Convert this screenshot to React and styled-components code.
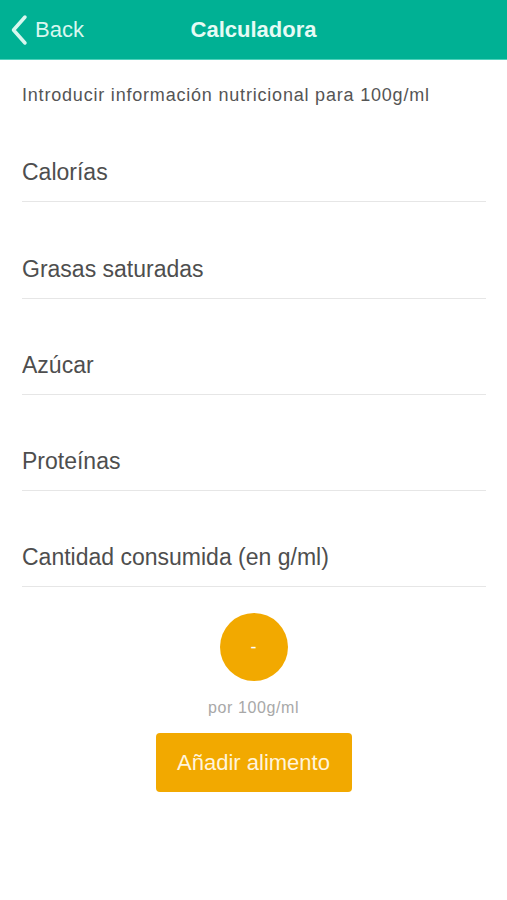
import React, { useState } from "react";
import styled, { createGlobalStyle } from "styled-components";

const GlobalStyle = createGlobalStyle`
  body {
    margin: 0;
    background: #ffffff;
    font-family: "Liberation Sans", Arial, sans-serif;
  }
`
const Page = styled.div`
  width: 507px;
  min-height: 900px;
  background: #ffffff;
`
const Header = styled.header`
  position: relative;
  height: 59px;
  background: #00b194;
  border-bottom: 1px solid #4fd1bb;
  display: flex;
  align-items: center;
  justify-content: center;
`
const BackButton = styled.button`
  position: absolute;
  left: 9px;
  top: 0;
  height: 59px;
  display: flex;
  align-items: center;
  gap: 4px;
  padding: 0;
  border: none;
  background: transparent;
  color: #d8f7ef;
  font-family: "Liberation Sans", Arial, sans-serif;
  font-size: 22px;
`
const Title = styled.h1`
  margin: 0;
  color: #e6fbf5;
  font-size: 22px;
  font-weight: bold;
`
const Intro = styled.p`
  margin: 25px 0 0 22px;
  line-height: 20px;
  font-size: 18px;
  letter-spacing: 0.8px;
  color: #555555;
`
const Form = styled.form`
  padding: 1px 21px 0 22px;
`
const Row = styled.div`
  height: 95.25px;
  display: flex;
  align-items: flex-end;
  border-bottom: 1px solid #e6e6e6;
`
const Field = styled.input`
  width: 100%;
  border: none;
  outline: none;
  padding: 0 0 16px 0;
  margin: 0;
  line-height: 26px;
  font-family: "Liberation Sans", Arial, sans-serif;
  font-size: 23px;
  color: #4a4a4a;
  background: transparent;
  &::placeholder {
    color: #4e4e4e;
  }
`
const Result = styled.div`
  display: flex;
  flex-direction: column;
  align-items: center;
`
const Circle = styled.div`
  margin-top: 26px;
  width: 68px;
  height: 68px;
  border-radius: 50%;
  background: #f2a900;
  color: #ffffff;
  display: flex;
  align-items: center;
  justify-content: center;
  font-size: 18px;
`
const Unit = styled.span`
  margin-top: 19px;
  line-height: 16px;
  font-size: 16px;
  letter-spacing: 0.6px;
  color: #a8a8a8;
`
const AddButton = styled.button`
  margin-top: 17px;
  width: 196px;
  height: 59px;
  border: none;
  border-radius: 4px;
  background: #f2a900;
  color: #fff4dc;
  font-family: "Liberation Sans", Arial, sans-serif;
  font-size: 22px;
`

const fields = [
  "Calorías",
  "Grasas saturadas",
  "Azúcar",
  "Proteínas",
  "Cantidad consumida (en g/ml)"
]

const App = () => {
  const [values, setValues] = useState({})

  const handleChanges = event => {
    setValues({
      ...values,
      [event.target.name]: event.target.value
    })
  }

  return (
    <Page>
      <GlobalStyle />
      <Header>
        <BackButton>
          <svg width="22" height="32" viewBox="0 0 22 32">
            <path d="M16 3 L4.5 16 L16 29" fill="none" stroke="#d8f7ef" strokeWidth="3.5" strokeLinecap="round" strokeLinejoin="round" />
          </svg>
          Back
        </BackButton>
        <Title>Calculadora</Title>
      </Header>
      <Intro>Introducir información nutricional para 100g/ml</Intro>
      <Form onSubmit={e => e.preventDefault()}>
        {fields.map(name => (
          <Row key={name}>
            <Field
              type="text"
              name={name}
              placeholder={name}
              value={values[name] || ""}
              onChange={handleChanges}
            />
          </Row>
        ))}
      </Form>
      <Result>
        <Circle>-</Circle>
        <Unit>por 100g/ml</Unit>
        <AddButton>Añadir alimento</AddButton>
      </Result>
    </Page>
  );
};

export default App;
